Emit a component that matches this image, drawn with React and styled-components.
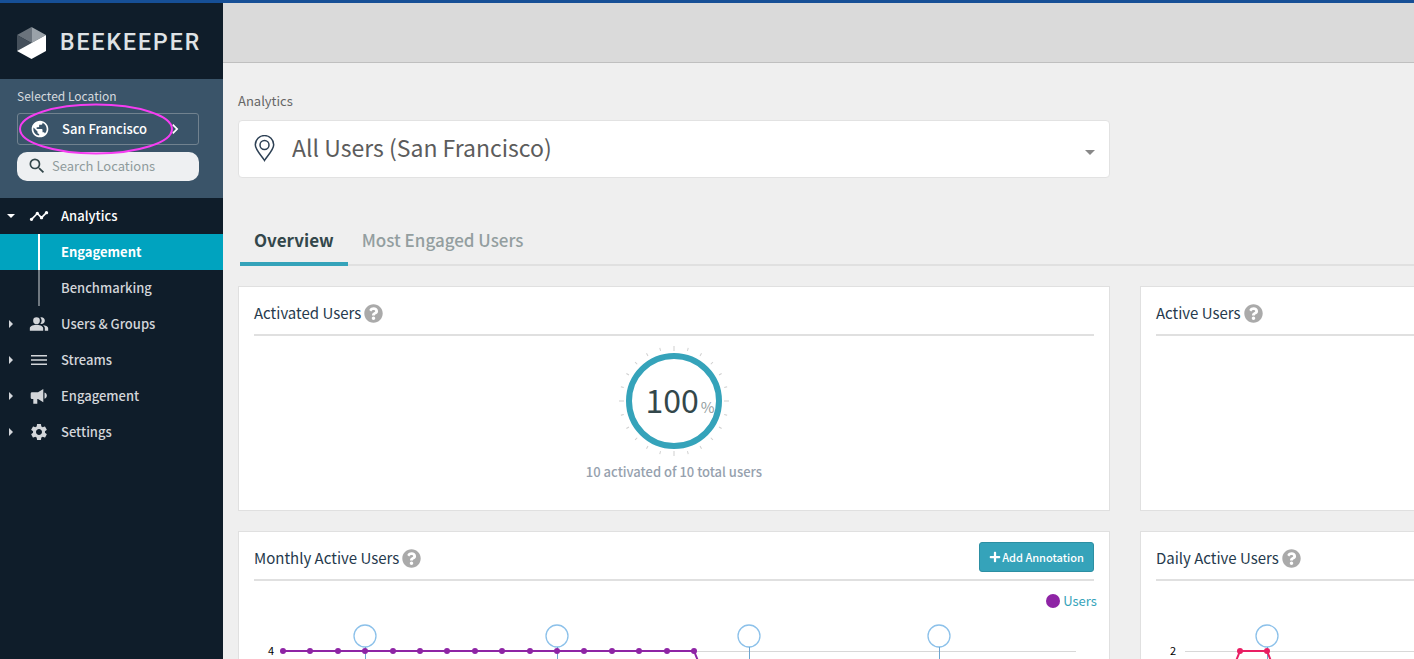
import React from "react";
import styled, { createGlobalStyle, css } from "styled-components";
import { MdPublic, MdSearch, MdTimeline, MdPeopleAlt, MdSettings, MdChevronRight } from "react-icons/md";
import { FaPlus, FaQuestionCircle } from "react-icons/fa";

const sans = `"Noto Sans CJK SC", "Noto Sans", sans-serif`;

const GlobalStyle = createGlobalStyle`
  *, *::before, *::after { box-sizing: border-box; }
  body { margin: 0; background: #efefef; font-family: ${sans}; }
  button, input, select { font: inherit; margin: 0; }
  h1, h2, p { margin: 0; font-weight: 400; }
  svg { flex-shrink: 0; }
`;

const Shell = styled.div`
  display: flex;
  height: 100vh;
  overflow: hidden;
  border-top: 3px solid #164f96;
`;

/* Sidebar */
const Sidebar = styled.aside`
  flex: 0 0 223px;
  min-width: 0;
  background: #0f1d2a;
  color: #d3d6da;
`;

const Brand = styled.a`
  display: flex;
  align-items: center;
  gap: 14px;
  height: 76px;
  padding: 3px 17px 0;
  color: #dfe2e5;
  text-decoration: none;
`;

const Wordmark = styled.span`
  font: 500 23px/24px Roboto, sans-serif;
  letter-spacing: 2px;
`;

const LocationPanel = styled.section`
  display: flex;
  flex-direction: column;
  height: 119px;
  padding: 8px 24px 0 17px;
  background: #3a5469;
`;

const LocationLabel = styled.p`
  font-size: 12px;
  line-height: 18px;
  color: #d5dadf;
`;

const LocationPicker = styled.div`
  position: relative;
  margin: 8px 0 7px;
`;

const LocationButton = styled.button`
  display: flex;
  align-items: center;
  width: 100%;
  height: 32px;
  padding: 0 12px;
  border: 1px solid #71828f;
  border-radius: 3px;
  background: transparent;
  color: #fff;
  font-size: 13px;
  font-weight: 500;

  span { margin: 0 18px 0 12px; padding-bottom: 2px; }
`;

const Ring = styled.svg`
  position: absolute;
  left: 1px;
  top: -10px;
  pointer-events: none;
`;

const SearchBox = styled.label`
  display: flex;
  align-items: center;
  gap: 5px;
  height: 29px;
  padding: 0 10px;
  border-radius: 10px;
  background: #eef0f2;
  color: #33474b;

  svg { margin-bottom: 2px; }
`;

const SearchInput = styled.input`
  width: 100%;
  min-width: 0;
  padding: 0 0 2px;
  border: 0;
  outline: 0;
  background: transparent;
  color: #33474b;
  font-size: 13px;
  line-height: 20px;

  &::placeholder { color: #8f9b9c; opacity: 1; }
`;

const NavItem = styled.a`
  display: grid;
  grid-template-columns: 22px 24px 1fr;
  align-items: center;
  height: 36px;
  padding-left: 5px;
  font-size: 13px;
  font-weight: 500;
  color: ${(p) => (p.$open ? "#fff" : "#d3d6da")};
  text-decoration: none;

  > svg { display: block; }
  > svg + svg { justify-self: center; }
  > span { padding: 0 0 2px 10px; }
`;

const SubItem = styled.a`
  display: flex;
  align-items: center;
  height: 36px;
  padding-left: 38px;
  font-size: 13px;
  font-weight: ${(p) => (p.$active ? 700 : 500)};
  color: ${(p) => (p.$active ? "#fff" : "#d3d6da")};
  background: ${(p) => (p.$active ? "#00a3bf" : "transparent")};
  text-decoration: none;

  > span { padding-bottom: 2px; }

  &::before {
    content: "";
    width: 2px;
    height: 36px;
    margin-right: 21px;
    background: ${(p) => (p.$active ? "#fff" : "#6f7880")};
  }
`;

/* Main column */
const Main = styled.main`
  flex: 1;
  min-width: 0;
  overflow: hidden;
`;

const TopBar = styled.header`
  height: 60px;
  background: #dadada;
  border-bottom: 1px solid #bfbfbf;
`;

const Content = styled.div`
  padding-left: 15px;
`;

const Board = styled.div`
  width: calc(151% - 2px);
  display: grid;
  grid-template-columns: 1fr 1fr;
  column-gap: 30px;
`;

const Crumb = styled.p`
  padding-top: 28px;
  font-size: 13px;
  line-height: 20px;
  color: #666;
`;

const ScopeField = styled.label`
  display: grid;
  align-items: center;
  margin-top: 9px;

  > * { grid-area: 1 / 1; }
  > svg { pointer-events: none; z-index: 1; margin-left: 16px; margin-bottom: 2px; }
  > svg:last-child { justify-self: end; margin: 7px 15px 0 0; }
`;

const ScopeSelect = styled.select`
  appearance: none;
  width: 100%;
  height: 58px;
  padding: 0 53px 4px;
  border: 1px solid #e2e2e2;
  border-radius: 4px;
  background: #fff;
  color: #5c5c5c;
  font-size: 23px;
`;

const Tabs = styled.div`
  display: flex;
  margin: 39px 0 20px 2px;
  border-bottom: 2px solid #e0e0e0;
`;

const Tab = styled.button`
  height: 49px;
  padding: 0 14px;
  margin-bottom: -2px;
  border: 0;
  border-bottom: 4px solid ${(p) => (p.$active ? "#35a3ba" : "transparent")};
  background: none;
  font-size: 17px;
  font-weight: ${(p) => (p.$active ? 700 : 500)};
  color: ${(p) => (p.$active ? "#33474b" : "#939e9f")};
`;

const Card = styled.section`
  height: ${(p) => (p.$tall ? "340px" : "225px")};
  margin-bottom: 20px;
  padding: 0 15px;
  border: 1px solid #e0e0e0;
  background: #fff;
`;

const CardHead = styled.header`
  display: flex;
  align-items: center;
  justify-content: space-between;
  height: 49px;
  border-bottom: 2px solid #e0e0e0;
`;

const CardTitle = styled.h2`
  display: flex;
  align-items: center;
  gap: 3px;
  padding-top: 4px;
  font-size: 15px;
  line-height: 24px;
  color: #263a4d;

  svg { color: #aaa; margin-top: 2px; }
`;

const AddButton = styled.button`
  display: flex;
  align-items: center;
  justify-content: center;
  gap: 1px;
  height: 30px;
  margin-top: 3px;
  padding: 0 9px;
  border: 1px solid #2c8fa3;
  border-radius: 3px;
  background: #35a3ba;
  color: #fff;
  font-size: 11px;
  font-weight: 500;
  line-height: 16px;

  span { padding-bottom: 1px; }
`;

const Gauge = styled.figure`
  display: flex;
  flex-direction: column;
  align-items: center;
  margin: 10px 0 0;
`;

const Dial = styled.div`
  display: grid;
  place-items: center;

  > * { grid-area: 1 / 1; }
`;

const DialValue = styled.p`
  display: flex;
  align-items: baseline;
  gap: 2px;
  padding: 4px 0 0 12px;
  font-size: 32px;
  line-height: 48px;
  color: #33474b;

  small { font-size: 15px; color: #939e9f; }
`;

const GaugeNote = styled.figcaption`
  margin-top: 6px;
  font-size: 13px;
  font-weight: 500;
  line-height: 20px;
  color: #96a1ae;
`;

const Legend = styled.p`
  display: flex;
  align-items: center;
  justify-content: flex-end;
  gap: 3px;
  height: 20px;
  margin: 10px -3px 1px 0;
  font-size: 13px;
  line-height: 20px;
  color: #35a3ba;

  &::before {
    content: "";
    width: 14px;
    height: 14px;
    border-radius: 50%;
    background: #8e24a5;
  }
`;

const Chart = styled.svg`
  display: block;
  width: 100%;
  height: 240px;
  ${(p) => p.$noLegend && css`margin-top: 31px;`}

  text { font: 400 11px ${sans}; fill: #000; }
`;

const Arrow = ({ down }) => (
  <svg width="12" height="12" viewBox="0 0 12 12" fill="currentColor" aria-hidden="true">
    <path d={down ? "M2 4h8L6 8z" : "M4 2v8l4-4z"} />
  </svg>
);

const Hexagon = () => (
  <svg width="29" height="32" viewBox="0 0 29 32" aria-hidden="true">
    <path d="M14.500 0L0 8l14.500 8z" fill="#6a737c" />
    <path d="M14.500 0L29 8l-14.500 8z" fill="#9aa2a9" />
    <path d="M0 8v16l14.500-8z" fill="#45505b" />
    <path d="M0 24L29 8v16l-14.500 8z" fill="#fff" />
  </svg>
);

const Lines = () => (
  <svg width="18" height="18" viewBox="0 0 18 18" fill="currentColor" aria-hidden="true">
    <path d="M1 4h16v1.500H1zM1 8.200h16v1.500H1zM1 12.500h16V14H1z" />
  </svg>
);

const Megaphone = () => (
  <svg width="18" height="18" viewBox="0 0 18 18" fill="currentColor" aria-hidden="true">
    <path d="M2 5.300h6l5.300-3.300v13.300L8 12H7.300v4.800H3.300V12H2a1.300 1.300 0 0 1-1.300-1.300V6.600A1.300 1.300 0 0 1 2 5.300zM14.500 5.600c3.200 1.200 3.200 5 0 6.200z" />
  </svg>
);

const Pin = () => (
  <svg width="21" height="27" viewBox="0 0 21 27" fill="none" stroke="#2d4054" strokeWidth="1.500" aria-hidden="true">
    <path d="M10.500 25.500C8.500 22 1.300 15 1.300 9.800a9.200 9.200 0 0 1 18.400 0c0 5.200-7.200 12.200-9.200 15.700z" />
    <circle cx="10.500" cy="10" r="4.500" />
  </svg>
);

const DialRing = () => (
  <svg width="110" height="110" viewBox="0 0 110 110" role="img" aria-label="100 percent activated">
    {Array.from({ length: 24 }, (_, i) => (
      <line key={i} x1="55" x2="55" y1="0" y2={i % 6 ? 3 : 5} stroke="#cfcfcf" transform={`rotate(${i * 15} 55 55)`} />
    ))}
    <circle cx="55" cy="55" r="45" fill="none" stroke="#35a3ba" strokeWidth="6" />
  </svg>
);

const Marker = ({ x }) => (
  <g fill="none" stroke="#8cc1ea">
    <circle cx={x} cy="24" r="11" strokeWidth="1.300" />
    <path d={`M${x + 0.5} 35v200`} stroke="#6fa5cf" />
  </g>
);

const monthly = Array.from({ length: 16 }, (_, i) => 29 + Math.round(i * 27.4));

const MonthlyChart = () => (
  <Chart role="img" aria-label="Monthly active users">
    <path d="M29 39.500H822" stroke="#d8d8d8" />
    <text x="14" y="43">4</text>
    {[111, 303, 495, 685].map((x) => <Marker key={x} x={x} />)}
    <path d="M29 39H440L480 138" fill="none" stroke="#8e24a5" strokeWidth="2" />
    {monthly.map((x) => <circle key={x} cx={x} cy="39" r="3" fill="#8e24a5" />)}
  </Chart>
);

const DailyChart = () => (
  <Chart role="img" aria-label="Daily active users" $noLegend>
    <path d="M29 39.500H840" stroke="#d8d8d8" />
    <text x="14" y="43">2</text>
    <Marker x={111} />
    <path d="M44 139L84 39H111L151 139" fill="none" stroke="#e91e63" strokeWidth="2" />
    {[84, 111].map((x) => <circle key={x} cx={x} cy="39" r="3" fill="#e91e63" />)}
  </Chart>
);

const Heading = ({ children }) => (
  <CardTitle>{children}<FaQuestionCircle size={19} aria-hidden="true" /></CardTitle>
);

export default function App() {
  return (
    <>
      <GlobalStyle />
      <Shell>
        <Sidebar>
          <Brand href="#"><Hexagon /><Wordmark>BEEKEEPER</Wordmark></Brand>
          <LocationPanel>
            <LocationLabel>Selected Location</LocationLabel>
            <LocationPicker>
              <LocationButton type="button">
                <MdPublic size={20} /><span>San Francisco</span><MdChevronRight size={20} />
              </LocationButton>
              <Ring width="156" height="52" viewBox="0 0 156 52" aria-hidden="true">
                <ellipse cx="78" cy="26" rx="76" ry="24.500" fill="none" stroke="#f63df2" strokeWidth="2" />
              </Ring>
            </LocationPicker>
            <SearchBox>
              <MdSearch size={20} aria-hidden="true" />
              <SearchInput type="search" placeholder="Search Locations" aria-label="Search Locations" />
            </SearchBox>
          </LocationPanel>
          <nav>
            <NavItem href="#" $open><Arrow down /><MdTimeline size={20} /><span>Analytics</span></NavItem>
            <SubItem href="#" $active><span>Engagement</span></SubItem>
            <SubItem href="#"><span>Benchmarking</span></SubItem>
            <NavItem href="#"><Arrow /><MdPeopleAlt size={20} /><span>Users &amp; Groups</span></NavItem>
            <NavItem href="#"><Arrow /><Lines /><span>Streams</span></NavItem>
            <NavItem href="#"><Arrow /><Megaphone /><span>Engagement</span></NavItem>
            <NavItem href="#"><Arrow /><MdSettings size={20} /><span>Settings</span></NavItem>
          </nav>
        </Sidebar>
        <Main>
          <TopBar />
          <Content>
            <Board>
              <div>
                <Crumb>Analytics</Crumb>
                <ScopeField>
                  <Pin />
                  <ScopeSelect aria-label="User scope"><option>All Users (San Francisco)</option></ScopeSelect>
                  <svg width="10" height="5" viewBox="0 0 10 5" aria-hidden="true"><path d="M0 0h10L5 5z" fill="#888" /></svg>
                </ScopeField>
              </div>
            </Board>
            <Tabs role="tablist">
              <Tab role="tab" aria-selected="true" $active>Overview</Tab>
              <Tab role="tab" aria-selected="false">Most Engaged Users</Tab>
            </Tabs>
            <Board>
              <Card>
                <CardHead><Heading>Activated Users</Heading></CardHead>
                <Gauge>
                  <Dial>
                    <DialRing />
                    <DialValue>100<small>%</small></DialValue>
                  </Dial>
                  <GaugeNote>10 activated of 10 total users</GaugeNote>
                </Gauge>
              </Card>
              <Card>
                <CardHead><Heading>Active Users</Heading></CardHead>
              </Card>
              <Card $tall>
                <CardHead>
                  <Heading>Monthly Active Users</Heading>
                  <AddButton type="button"><FaPlus size={12} /><span>Add Annotation</span></AddButton>
                </CardHead>
                <Legend>Users</Legend>
                <MonthlyChart />
              </Card>
              <Card $tall>
                <CardHead><Heading>Daily Active Users</Heading></CardHead>
                <DailyChart />
              </Card>
            </Board>
          </Content>
        </Main>
      </Shell>
    </>
  );
}
